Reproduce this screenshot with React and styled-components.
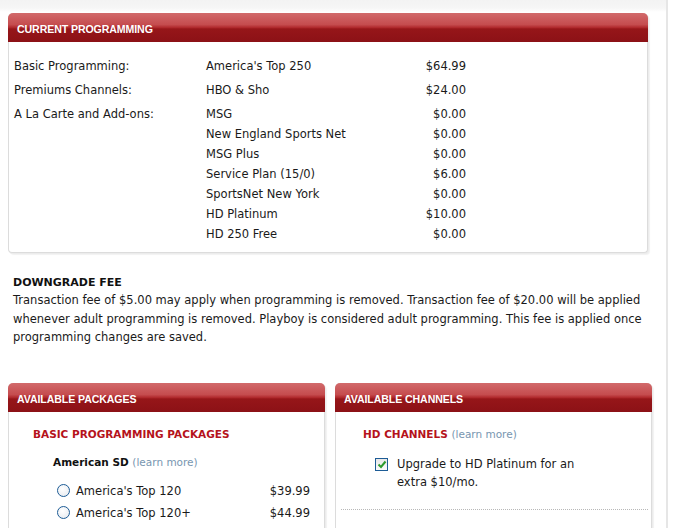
import React from "react";
import styled, { createGlobalStyle } from "styled-components";

const Global = createGlobalStyle`
  html, body { margin: 0; padding: 0; background: #fff; }
  body { font-family: "DejaVu Sans", Verdana, sans-serif; font-size: 11.5px; color: #1a1a1a; }
`;

const Page = styled.div`
  width: 668px;
  border-right: 2px solid #e6e6e6;
  min-height: 528px;
  box-sizing: border-box;
  background: linear-gradient(#f3f3f3, #f6f6f6 8px, #fff 12px);
  padding: 13px 0 0 8px;
`;

const Panel = styled.section`
  width: ${p => p.$w}px;
  background: #fff;
  border: 1px solid #dcdcdc;
  border-top: none;
  border-radius: 5px 5px 4px 4px;
  box-shadow: 1px 1px 0 #ececec, 2px 2px 1px #f2f2f2;
  box-sizing: border-box;
`;

const PanelHead = styled.div`
  height: 29px;
  margin: 0 -1px;
  border-radius: 5px 5px 0 0;
  background: linear-gradient(#d26a6b 0%, #c54c4e 40%, #b02a2d 50%, #961619 55%, #8c1116 100%);
  color: #fff;
  font-family: "Liberation Sans", Arial, sans-serif;
  font-weight: bold;
  font-size: 10.6px;
  display: flex;
  align-items: center;
  padding-left: 9px;
  padding-top: 3px;
  box-sizing: border-box;
  letter-spacing: -0.1px;
`;

const ProgGrid = styled.div`
  display: grid;
  grid-template-columns: 192px 180px 80px;
  padding: 14px 0 8px 5px;
`;

const Cell = styled.div`
  height: ${p => (p.$tall ? 24 : 20)}px;
  line-height: 20px;
  text-align: ${p => (p.$right ? "right" : "left")};
  white-space: nowrap;
`;

const Fee = styled.div`
  padding: 22px 0 0 5px;
  width: 645px;
`;

const FeeTitle = styled.div`
  font-weight: bold;
  font-size: 11px;
  line-height: 16px;
  color: #111;
`;

const FeeText = styled.p`
  margin: 0;
  line-height: 18.5px;
`;

const Columns = styled.div`
  display: flex;
  gap: 10px;
  margin-top: 36px;
`;

const Body = styled.div`
  padding: ${p => p.$pad};
  height: 118px;
`;

const RedTitle = styled.div`
  color: #b5121b;
  font-weight: bold;
  font-size: 10.5px;
  line-height: 16px;
`;

const Learn = styled.span`
  color: #7896b0;
  font-weight: normal;
  font-size: 10.5px;
`;

const SubTitle = styled.div`
  font-weight: bold;
  font-size: 10.5px;
  margin: 12px 0 0 20px;
  line-height: 16px;
  color: #111;
`;

const RadioList = styled.div`
  margin-top: 10px;
`;

const RadioRow = styled.label`
  display: flex;
  align-items: center;
  margin-left: 24px;
  height: 22px;
  width: 253px;
`;

const Radio = styled.span`
  width: 11px;
  height: 11px;
  border-radius: 50%;
  border: 1px solid #1d5c96;
  background: radial-gradient(circle at 40% 35%, #fff, #e4e8ee);
  margin-right: 6px;
  flex: none;
`;

const Grow = styled.span`flex: 1;`;

const CheckRow = styled.div`
  display: flex;
  margin: 13px 0 0 12px;
  line-height: 18px;
`;

const Box = styled.span`
  width: 11px;
  height: 11px;
  border: 1px solid #1d5c96;
  background: linear-gradient(#e8e8e8, #fafafa);
  margin: 3px 9px 0 0;
  flex: none;
  display: flex;
  align-items: center;
  justify-content: center;
`;

const Dotted = styled.div`
  border-top: 1px dotted #b8b8b8;
  margin: 18px 0 0 -22px;
  width: 307px;
`;

const prog = [
  ["Basic Programming:", "America's Top 250", "$64.99", true],
  ["Premiums Channels:", "HBO & Sho", "$24.00", true],
  ["A La Carte and Add-ons:", "MSG", "$0.00"],
  ["", "New England Sports Net", "$0.00"],
  ["", "MSG Plus", "$0.00"],
  ["", "Service Plan (15/0)", "$6.00"],
  ["", "SportsNet New York", "$0.00"],
  ["", "HD Platinum", "$10.00"],
  ["", "HD 250 Free", "$0.00"],
];

export default function App() {
  return (
    <>
      <Global />
      <Page>
        <Panel $w={640}>
          <PanelHead>CURRENT PROGRAMMING</PanelHead>
          <ProgGrid>
            {prog.map(([a, b, c, t], i) => (
              <React.Fragment key={i}>
                <Cell $tall={t}>{a}</Cell>
                <Cell $tall={t}>{b}</Cell>
                <Cell $tall={t} $right>{c}</Cell>
              </React.Fragment>
            ))}
          </ProgGrid>
        </Panel>
        <Fee>
          <FeeTitle>DOWNGRADE FEE</FeeTitle>
          <FeeText>
            Transaction fee of $5.00 may apply when programming is removed. Transaction fee of $20.00 will be applied
            whenever adult programming is removed. Playboy is considered adult programming. This fee is applied once
            programming changes are saved.
          </FeeText>
        </Fee>
        <Columns>
          <Panel $w={317}>
            <PanelHead>AVAILABLE PACKAGES</PanelHead>
            <Body $pad="14px 0 0 24px">
              <RedTitle>BASIC PROGRAMMING PACKAGES</RedTitle>
              <SubTitle>
                American SD <Learn>(learn more)</Learn>
              </SubTitle>
              <RadioList>
                <RadioRow>
                  <Radio />
                  <Grow>America's Top 120</Grow>
                  <span>$39.99</span>
                </RadioRow>
                <RadioRow>
                  <Radio />
                  <Grow>America's Top 120+</Grow>
                  <span>$44.99</span>
                </RadioRow>
              </RadioList>
            </Body>
          </Panel>
          <Panel $w={317}>
            <PanelHead>AVAILABLE CHANNELS</PanelHead>
            <Body $pad="14px 0 0 27px">
              <RedTitle>
                HD CHANNELS <Learn>(learn more)</Learn>
              </RedTitle>
              <CheckRow>
                <Box>
                  <svg width="10" height="9" viewBox="0 0 10 9">
                    <path d="M1.5 4.5 L4 7 L8.5 1.5" stroke="#2c9a2c" strokeWidth="2" fill="none" />
                  </svg>
                </Box>
                <span>
                  Upgrade to HD Platinum for an
                  <br />
                  extra $10/mo.
                </span>
              </CheckRow>
              <Dotted />
            </Body>
          </Panel>
        </Columns>
      </Page>
    </>
  );
}
